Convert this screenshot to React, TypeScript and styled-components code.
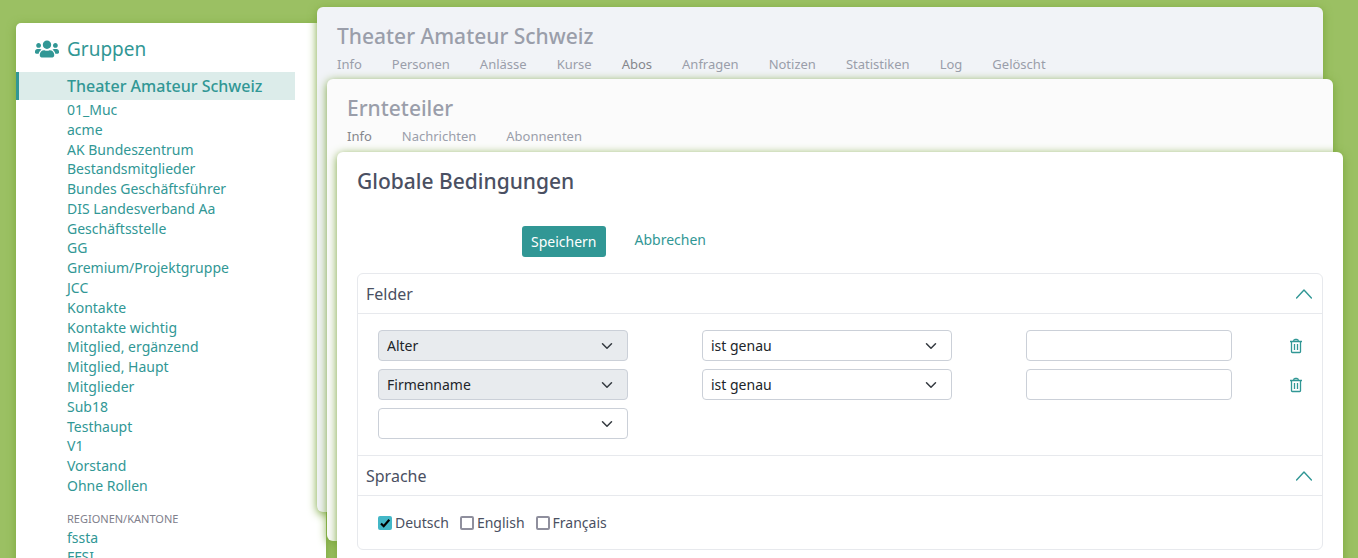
import React, { useState } from 'react';
import styled, { createGlobalStyle } from 'styled-components';
import { FaUsers } from 'react-icons/fa';

const teal = '#319795';
const glow = '0 2px 10px #7aa53c';

const GlobalStyle = createGlobalStyle`
  *, *::before, *::after { box-sizing: border-box; }
  body {
    margin: 0;
    background: #9bc063;
    color: #4a5062;
    font-family: 'Noto Sans', 'Liberation Sans', sans-serif;
    font-size: 14px;
    line-height: 21px;
  }
  a { color: ${teal}; text-decoration: none; }
  h1, h2, h3, ul { margin: 0; padding: 0; }
  ul { list-style: none; }
`;

const Page = styled.div`
  display: flex;
  align-items: flex-start;
  height: 100vh;
  overflow-y: auto;
  scrollbar-width: none;
`;

const Sidebar = styled.nav`
  flex: 0 0 310px;
  margin: 23px 0 0 16px;
  padding-bottom: 40px;
  background: #fff;
  border-radius: 5px;
  box-shadow: ${glow};
`;

const SidebarHead = styled.a`
  display: flex;
  align-items: center;
  gap: 8px;
  height: 49px;
  padding: 3px 0 0 19px;
  font-size: 19px;
  line-height: 28px;
`;

const CurrentGroup = styled.a`
  display: block;
  margin-right: 31px;
  padding-left: 48px;
  border-left: 3px solid ${teal};
  background: #dcecea;
  font-size: 16px;
  font-weight: 500;
  line-height: 28px;
`;

const GroupList = styled.ul<{ $minHeight?: number }>`
  display: flex;
  flex-direction: column;
  justify-content: space-between;
  min-height: ${(p) => p.$minHeight ?? 0}px;
  padding-left: 51px;
  line-height: 19px;
`;

const GroupHeading = styled.h3`
  padding: 15px 0 0 51px;
  color: #80808c;
  font-size: 11px;
  font-weight: 400;
  line-height: 18px;
  text-transform: uppercase;
`;

const Stack = styled.main`
  position: relative;
  flex: 1;
  min-width: 0;
  display: grid;
  grid-template-columns: 10px 10px minmax(0, 1fr) 10px 10px;
  grid-template-rows: 72px 73px minmax(360px, auto) 29px auto;
  margin: 7px 15px 0 -9px;
`;

const Sheet = styled.section<{ $level: number; $fill: string }>`
  grid-column: ${(p) => p.$level} / span 3;
  grid-row: ${(p) => p.$level} / span 3;
  min-width: 0;
  padding: 12px 20px 24px;
  border-radius: 6px;
  background: ${(p) => p.$fill};
  box-shadow: ${glow};
`;

const SheetTitle = styled.h1<{ $muted?: boolean }>`
  color: ${(p) => (p.$muted ? '#9a9eaa' : '#4a5062')};
  font-size: 21px;
  font-weight: 500;
  line-height: 34px;
`;

const Tabs = styled.nav`
  display: flex;
  gap: 30px;
`;

const Tab = styled.a<{ $active?: boolean }>`
  color: ${(p) => (p.$active ? '#85878c' : '#9a9eaa')};
  font-size: 13px;
  line-height: 22px;
`;

const Actions = styled.div`
  display: flex;
  align-items: flex-start;
  gap: 29px;
  padding: 28px 0 16px 165px;
`;

const SaveButton = styled.button`
  height: 31px;
  padding: 0 9px;
  border: 0;
  border-radius: 3px;
  background: ${teal};
  color: #fff;
  font: inherit;
`;

const CancelLink = styled.a`
  padding-top: 3px;
`;

const Accordion = styled.div`
  border: 1px solid #e7e9ed;
  border-radius: 6px;
`;

const AccordionHead = styled.button`
  display: flex;
  align-items: center;
  justify-content: space-between;
  width: 100%;
  height: 39px;
  padding: 1px 10px 0 8px;
  border: 0;
  background: transparent;
  color: #4a5062;
  font: inherit;
  font-size: 16px;
  text-align: left;
`;

const AccordionItem = styled.div`
  & + & { border-top: 1px solid #e7e9ed; }
`;

const AccordionBody = styled.div`
  display: flex;
  flex-direction: column;
  gap: 8px;
  padding: 16px 20px;
  border-top: 1px solid #e7e9ed;
`;

const FieldRow = styled.div`
  display: grid;
  grid-template-columns: minmax(0, 250fr) minmax(0, 250fr) minmax(0, 276fr);
  column-gap: 74px;
`;

const SelectWrap = styled.div`
  position: relative;
  svg {
    position: absolute;
    top: 10px;
    right: 15px;
    pointer-events: none;
  }
`;

const SelectBox = styled.select`
  display: block;
  appearance: none;
  width: 100%;
  height: 31px;
  padding: 0 32px 0 8px;
  border: 1px solid #cbd0d8;
  border-radius: 4px;
  background: #fff;
  color: #212529;
  font: inherit;
  opacity: 1;
  &:disabled { background: #e8ebee; }
`;

const ValueCell = styled.div`
  display: flex;
  align-items: center;
  gap: 58px;
`;

const ValueInput = styled.input`
  flex: 1;
  min-width: 0;
  height: 31px;
  padding: 0 8px;
  border: 1px solid #cbd0d8;
  border-radius: 4px;
  background: #fff;
  font: inherit;
`;

const IconButton = styled.button`
  display: flex;
  padding: 0;
  border: 0;
  background: transparent;
  color: ${teal};
`;

const CheckRow = styled.div`
  display: flex;
  gap: 11px;
`;

const CheckLabel = styled.label`
  position: relative;
  display: flex;
  align-items: center;
  gap: 3px;
  svg {
    position: absolute;
    top: 4px;
    left: 0;
    pointer-events: none;
  }
`;

const CheckInput = styled.input`
  appearance: none;
  width: 14px;
  height: 14px;
  margin: 0;
  border: 2px solid #8f8f9d;
  border-radius: 2px;
  background: #fff;
  &:checked {
    border-color: #43b7c7;
    background: #43b7c7;
  }
`;

const Chevron = () => (
  <svg width="12" height="12" viewBox="0 0 16 16" fill="none" stroke="#343a40" strokeWidth="2" strokeLinecap="round" strokeLinejoin="round" aria-hidden="true">
    <path d="M2 5l6 6 6-6" />
  </svg>
);

const Collapse = () => (
  <svg width="16" height="16" viewBox="0 0 16 16" fill="none" stroke={teal} strokeWidth="1.4" strokeLinecap="round" strokeLinejoin="round" aria-hidden="true">
    <path d="M.6 11.900L8 4.100l7.400 7.800" />
  </svg>
);

const Trash = () => (
  <svg width="12" height="16" viewBox="0 0 12 16" fill="none" stroke="currentColor" aria-hidden="true">
    <path d="M0 3.500h12M1.500 3.500v10.200q0 .8.8.8h7.400q.8 0 .8-.8V3.500M3.400 3.500q.3-2 1.600-2h2q1.300 0 1.600 2M4.500 6v6M7.500 6v6" strokeWidth="1.300" />
  </svg>
);

const groups = [
  '01_Muc', 'acme', 'AK Bundeszentrum', 'Bestandsmitglieder', 'Bundes Geschäftsführer',
  'DIS Landesverband Aa', 'Geschäftsstelle', 'GG', 'Gremium/Projektgruppe', 'JCC', 'Kontakte',
  'Kontakte wichtig', 'Mitglied, ergänzend', 'Mitglied, Haupt', 'Mitglieder', 'Sub18',
  'Testhaupt', 'V1', 'Vorstand', 'Ohne Rollen',
];
const regions = ['fssta', 'FFSI'];
const groupTabs = ['Info', 'Personen', 'Anlässe', 'Kurse', 'Abos', 'Anfragen', 'Notizen', 'Statistiken', 'Log', 'Gelöscht'];
const listTabs = ['Info', 'Nachrichten', 'Abonnenten'];

const Groups = ({ names, minHeight }: { names: string[]; minHeight?: number }) => (
  <GroupList $minHeight={minHeight}>
    {names.map((name) => (
      <li key={name}><a href="#">{name}</a></li>
    ))}
  </GroupList>
);

const TabBar = ({ names, active }: { names: string[]; active: string }) => (
  <Tabs>
    {names.map((name) => (
      <Tab key={name} href="#" $active={name === active}>{name}</Tab>
    ))}
  </Tabs>
);

const Select = ({ label, options, disabled }: { label: string; options: string[]; disabled?: boolean }) => (
  <SelectWrap>
    <SelectBox aria-label={label} disabled={disabled}>
      {options.map((o) => <option key={o}>{o}</option>)}
    </SelectBox>
    <Chevron />
  </SelectWrap>
);

const Section = ({ title, children }: { title: string; children: React.ReactNode }) => {
  const [open, setOpen] = useState(true);
  return (
    <AccordionItem>
      <AccordionHead type="button" aria-expanded={open} onClick={() => setOpen(!open)}>
        {title}
        <Collapse />
      </AccordionHead>
      {open && <AccordionBody>{children}</AccordionBody>}
    </AccordionItem>
  );
};

const Check = ({ label, initial = false }: { label: string; initial?: boolean }) => {
  const [on, setOn] = useState(initial);
  return (
    <CheckLabel>
      <CheckInput type="checkbox" checked={on} onChange={() => setOn(!on)} />
      {on && (
        <svg width="14" height="14" viewBox="0 0 14 14" fill="none" stroke="#000" strokeWidth="2.2" aria-hidden="true">
          <path d="M3 7.500l2.700 2.700L11.300 3.800" />
        </svg>
      )}
      {label}
    </CheckLabel>
  );
};

export default function App() {
  return (
    <>
      <GlobalStyle />
      <Page>
        <Sidebar>
          <SidebarHead href="#"><FaUsers size={24} />Gruppen</SidebarHead>
          <CurrentGroup href="#">Theater Amateur Schweiz</CurrentGroup>
          <Groups names={groups} minHeight={395} />
          <GroupHeading>Regionen/Kantone</GroupHeading>
          <Groups names={regions} />
        </Sidebar>
        <Stack>
          <Sheet $level={1} $fill="#f1f3f7">
            <SheetTitle as="h2" $muted>Theater Amateur Schweiz</SheetTitle>
            <TabBar names={groupTabs} active="Abos" />
          </Sheet>
          <Sheet $level={2} $fill="#fbfbfb">
            <SheetTitle as="h2" $muted>Ernteteiler</SheetTitle>
            <TabBar names={listTabs} active="Info" />
          </Sheet>
          <Sheet $level={3} $fill="#fff">
            <SheetTitle>Globale Bedingungen</SheetTitle>
            <form onSubmit={(e) => e.preventDefault()}>
              <Actions>
                <SaveButton type="submit">Speichern</SaveButton>
                <CancelLink href="#">Abbrechen</CancelLink>
              </Actions>
              <Accordion>
                <Section title="Felder">
                  {['Alter', 'Firmenname'].map((field) => (
                    <FieldRow key={field}>
                      <Select label="Feld" options={[field]} disabled />
                      <Select label={`Bedingung ${field}`} options={['ist genau']} />
                      <ValueCell>
                        <ValueInput type="text" aria-label={`Wert ${field}`} />
                        <IconButton type="button" aria-label={`${field} entfernen`}><Trash /></IconButton>
                      </ValueCell>
                    </FieldRow>
                  ))}
                  <FieldRow>
                    <Select label="Neues Feld" options={['', 'Alter', 'Firmenname']} />
                  </FieldRow>
                </Section>
                <Section title="Sprache">
                  <CheckRow>
                    <Check label="Deutsch" initial />
                    <Check label="English" />
                    <Check label="Français" />
                  </CheckRow>
                </Section>
              </Accordion>
            </form>
          </Sheet>
        </Stack>
      </Page>
    </>
  );
}
